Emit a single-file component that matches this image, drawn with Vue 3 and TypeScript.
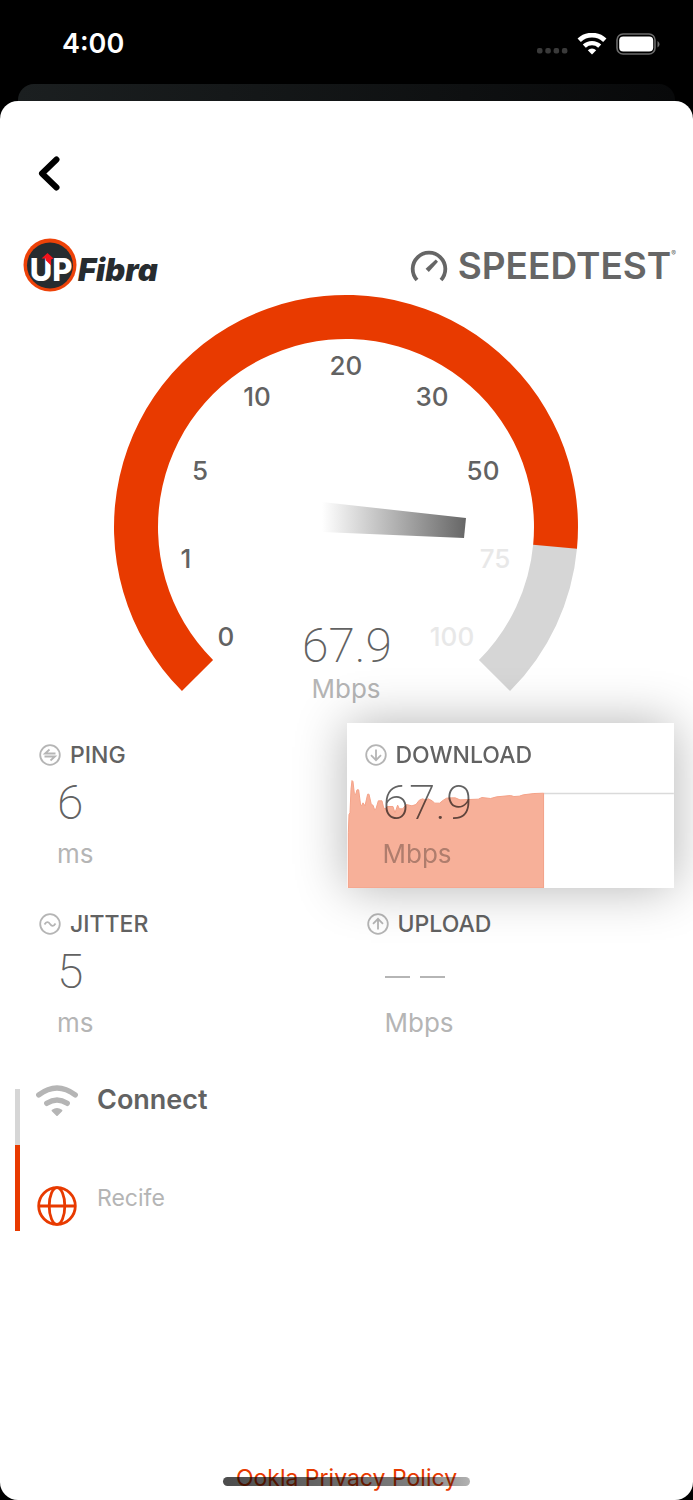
<script setup lang="ts">
import { computed } from 'vue'

interface Tick {
  label: string
  x: number
  y: number
  dim?: boolean
}

const OUTER = 232
const INNER = 188
const speed = 67.9
const needleAngle = 5.4

const ticks: Tick[] = [
  { label: '0', x: -120, y: 109 },
  { label: '1', x: -160, y: 31 },
  { label: '5', x: -146, y: -57 },
  { label: '10', x: -89, y: -131 },
  { label: '20', x: 0, y: -162 },
  { label: '30', x: 86, y: -131 },
  { label: '50', x: 137, y: -57 },
  { label: '75', x: 149, y: 31, dim: true },
  { label: '100', x: 106, y: 109, dim: true },
]

function band(from: number, to: number): string {
  const pt = (r: number, a: number) => {
    const rad = (a * Math.PI) / 180
    return `${(r * Math.cos(rad)).toFixed(2)} ${(r * Math.sin(rad)).toFixed(2)}`
  }
  const large = to - from > 180 ? 1 : 0
  return (
    `M${pt(OUTER, from)}A${OUTER} ${OUTER} 0 ${large} 1 ${pt(OUTER, to)}` +
    `L${pt(INNER, to)}A${INNER} ${INNER} 0 ${large} 0 ${pt(INNER, from)}Z`
  )
}

const track = band(needleAngle - 0.2, 45)
const progress = band(-225, needleAngle)

const samples: [number, number][] = [
  [4, 330], [6, 275], [9, 270], [12, 200], [15, 173], [18, 176], [22, 212], [26, 215],
  [30, 201], [35, 201], [41, 248], [44, 248], [48, 240], [54, 249], [62, 214], [66, 214],
  [73, 245], [78, 247], [83, 261], [87, 258], [94, 234], [105, 234], [110, 255], [115, 258],
  [121, 251], [138, 251], [144, 270], [152, 247], [157, 258], [167, 258], [178, 245],
  [195, 249], [207, 245], [217, 232], [227, 228], [237, 232], [244, 228], [256, 234],
  [263, 241], [278, 241], [289, 232], [299, 226], [313, 225], [325, 225], [339, 231],
  [394, 229], [405, 224], [431, 227], [449, 222], [491, 218], [501, 221], [517, 220],
  [529, 216], [561, 212], [590, 211],
]

const area = computed(() => `M4 496L${samples.map(([x, y]) => `${x} ${y}`).join('L')}V496Z`)
</script>

<template>
  <div class="phone">
    <header class="status">
      <time class="clock">4:00</time>
      <div class="status-icons">
        <svg class="dots" width="31" height="20" viewBox="0 0 31 20" aria-hidden="true">
          <rect v-for="n in 4" :key="n" :x="(n - 1) * 8.3" y="13" width="5.5" height="5.5" rx="2" fill="#3a3a3a" />
        </svg>
        <svg width="30" height="22" viewBox="0 0 30 22" fill="none" stroke="#fff" aria-hidden="true">
          <path d="M2.200 7.300a18.500 18.500 0 0 1 25.600 0" stroke-width="4.800" />
          <path d="M7.300 13.200a11.200 11.200 0 0 1 15.400 0" stroke-width="4.400" />
          <path d="M10.800 17.200a6 6 0 0 1 8.400 0L15 21.600Z" fill="#fff" stroke="none" />
        </svg>
        <svg width="44" height="22" viewBox="0 0 44 22" aria-hidden="true">
          <rect x="1" y="1" width="38" height="20" rx="6" fill="none" stroke="#6b6b6b" stroke-width="1.6" />
          <rect x="3.200" y="3.500" width="34" height="15" rx="4" fill="#fff" />
          <path d="M41.500 8v6.500c2.600-1.400 2.600-5 0-6.500Z" fill="#6b6b6b" />
        </svg>
      </div>
    </header>
    <div class="behind"></div>

    <main class="sheet">
      <button class="back" type="button" aria-label="Back">
        <svg width="22" height="36" viewBox="0 0 22 36" fill="none" stroke="#000" stroke-width="6" stroke-linecap="round" stroke-linejoin="round" aria-hidden="true">
          <path d="M18.500 3.500 4 17.500 18.500 31.500" />
        </svg>
      </button>

      <div class="brands">
        <svg class="up-logo" width="136" height="54" viewBox="0 0 136 54" role="img" aria-label="UP Fibra">
          <circle cx="27" cy="27" r="26.500" fill="#ee4208" />
          <circle cx="27" cy="27.500" r="23" fill="#272c2f" />
          <text class="up" x="28" y="43" text-anchor="middle">UP</text>
          <path d="M18.500 20.500 24.500 15l6 5.500-2.500 1v6l-5.500-5.500v-1.500Z" fill="#f5131c" />
          <text class="fibra" x="55" y="43">Fibra</text>
        </svg>
        <div class="speedtest">
          <svg width="38" height="34" viewBox="0 0 38 34" fill="none" stroke="#666" aria-hidden="true">
            <path d="M7 31A16.300 16.300 0 1 1 31 31" stroke-width="3.800" />
            <path d="M15.600 19.800 25.800 10.500l2.200 2.200-9.200 10.200Z" fill="#666" stroke="none" />
          </svg>
          <span class="wordmark">SPEEDTEST</span><sup class="reg">®</sup>
        </div>
      </div>

      <svg class="gauge" viewBox="-346 -235 693 412" role="img" aria-label="Download speed gauge">
        <defs>
          <linearGradient id="needle-fade" x1="0" x2="1">
            <stop offset="0" stop-color="#666" stop-opacity="0" />
            <stop offset="1" stop-color="#666" />
          </linearGradient>
        </defs>
        <path :d="track" fill="#d6d6d6" />
        <path :d="progress" fill="#e83a00" />
        <path d="M-24-25 120-9 118 11-24 5Z" fill="url(#needle-fade)" />
        <text v-for="t in ticks" :key="t.label" :x="t.x" :y="t.y" class="tick" :class="{ dim: t.dim }">{{ t.label }}</text>
        <text x="1" y="135" class="reading">{{ speed }}</text>
        <text x="0" y="171" class="reading-unit">Mbps</text>
      </svg>

      <section class="metrics">
        <article class="metric">
          <h2 class="label">
            <svg class="glyph" viewBox="0 0 22 22" aria-hidden="true">
              <circle cx="11" cy="11" r="9.800" />
              <path d="M16.500 9.500H6l4.500-4M5.500 12.500H16l-4.500 4" />
            </svg>
            PING
          </h2>
          <p class="value">6</p>
          <p class="unit">ms</p>
        </article>

        <article class="metric active">
          <h2 class="label">
            <svg class="glyph" viewBox="0 0 22 22" aria-hidden="true">
              <circle cx="11" cy="11" r="9.800" />
              <path d="M11 5.500v10.500M6 11.200l5 5 5-5" />
            </svg>
            DOWNLOAD
          </h2>
          <p class="value">{{ speed }}</p>
          <p class="unit">Mbps</p>
          <svg class="chart" viewBox="0 0 983 496" preserveAspectRatio="none" aria-hidden="true">
            <path d="M590 212H981" stroke="#dadada" stroke-width="5" />
            <path :d="area" fill="#f7b099" stroke="#f4a288" stroke-width="3" />
          </svg>
        </article>

        <article class="metric">
          <h2 class="label">
            <svg class="glyph" viewBox="0 0 22 22" aria-hidden="true">
              <circle cx="11" cy="11" r="9.800" />
              <path d="M5.500 11.500q2.750-4.500 5.500-.5t5.500-.5" />
            </svg>
            JITTER
          </h2>
          <p class="value">5</p>
          <p class="unit">ms</p>
        </article>

        <article class="metric">
          <h2 class="label">
            <svg class="glyph" viewBox="0 0 22 22" aria-hidden="true">
              <circle cx="11" cy="11" r="9.800" />
              <path d="M11 16.500V6M6 10.800l5-5 5 5" />
            </svg>
            UPLOAD
          </h2>
          <p class="value pending" aria-label="Pending"><i></i><i></i></p>
          <p class="unit">Mbps</p>
        </article>
      </section>

      <section class="network">
        <div class="row wifi-row">
          <svg class="net-icon" width="42" height="32" viewBox="0 0 42 32" fill="none" stroke="#b5b5b5" stroke-linecap="round" aria-hidden="true">
            <path d="M2.800 9.800Q21-4 39.200 9.800" stroke-width="5.400" />
            <path d="M10.800 18.300q10.200-6.500 20.400 0" stroke-width="5.400" />
            <path d="M16.500 25.500q4.500-3 9 0L21 30Z" fill="#b5b5b5" stroke-width="1.800" stroke-linejoin="round" />
          </svg>
          <span class="provider">Connect</span>
        </div>
        <div class="row server-row">
          <svg class="net-icon" width="42" height="40" viewBox="0 0 42 40" fill="none" stroke="#e83a00" stroke-width="2.800" aria-hidden="true">
            <circle cx="21" cy="20" r="18.300" />
            <ellipse cx="21" cy="20" rx="7.800" ry="18.300" />
            <path d="M2.500 20h37" />
          </svg>
          <span class="server">Recife</span>
        </div>
      </section>

      <footer class="footer">
        <a class="policy" href="#privacy">Ookla Privacy Policy</a>
        <span class="home-indicator"></span>
      </footer>
    </main>
  </div>
</template>

<style>
html,
body {
  margin: 0;
  background: #000;
}
</style>

<style scoped>
.phone {
  display: flex;
  flex-direction: column;
  min-height: 100vh;
  background: #000;
  color: #626262;
  font-family: Inter, "Open Sans", sans-serif;
}
.status {
  display: flex;
  align-items: center;
  justify-content: space-between;
  height: 84px;
  box-sizing: border-box;
  padding: 4px 33px 0 62px;
  color: #fff;
}
.clock {
  font-size: 27px;
  line-height: 32px;
  font-weight: 600;
}
.status-icons {
  display: flex;
  align-items: center;
  gap: 9px;
}
.dots {
  align-self: flex-end;
}
.behind {
  height: 17px;
  margin: 0 18px;
  border-radius: 16px 16px 0 0;
  background: linear-gradient(90deg, #1b1f20, #08090a);
}
.sheet {
  display: flex;
  flex: 1;
  flex-direction: column;
  background: #fff;
  border-radius: 18px;
}
.back {
  display: flex;
  align-self: flex-start;
  margin: 55px 0 0 38px;
  padding: 0;
  border: 0;
  background: none;
  cursor: pointer;
}
.brands {
  display: flex;
  align-items: center;
  justify-content: space-between;
  height: 54px;
  margin-top: 46px;
  padding: 0 17px 0 23px;
}
.up-logo {
  overflow: visible;
}
.up {
  fill: #fff;
  font-size: 31px;
  font-weight: 800;
}
.fibra {
  fill: #272c2f;
  font-size: 31px;
  font-weight: 900;
  font-style: italic;
}
.speedtest {
  display: flex;
  align-items: center;
  padding-top: 2px;
  color: #666;
}
.wordmark {
  margin-left: 10px;
  font-size: 37px;
  line-height: 40px;
  font-weight: 600;
}
.reg {
  align-self: flex-start;
  font-size: 7px;
  line-height: 16px;
}
.gauge {
  display: block;
  width: 100%;
}
.tick {
  fill: #626262;
  font-size: 26px;
  font-weight: 500;
  text-anchor: middle;
  dominant-baseline: central;
}
.tick.dim {
  fill: #e8e8e8;
}
.reading {
  fill: #626262;
  font-family: Roboto, Inter, sans-serif;
  font-size: 48px;
  font-weight: 200;
  text-anchor: middle;
}
.reading-unit {
  fill: #b5b5b5;
  font-size: 26px;
  text-anchor: middle;
}
.metrics {
  display: grid;
  grid-template-columns: 1fr 1fr;
  gap: 4px 0;
  padding: 19px 19px 0;
}
.metric {
  height: 165px;
  box-sizing: border-box;
  padding: 20px 20px 0;
}
.metric.active {
  position: relative;
  padding-left: 18px;
  background: #fff;
  box-shadow: 0 0 48px rgba(0, 0, 0, 0.3);
  isolation: isolate;
}
.label {
  display: flex;
  align-items: center;
  gap: 9px;
  margin: 0;
  font-size: 23px;
  line-height: 24px;
  font-weight: 500;
}
.glyph {
  width: 22px;
  height: 22px;
  fill: none;
  stroke: #b5b5b5;
  stroke-width: 1.800;
}
.value {
  height: 46px;
  margin: 13px 0 0 18px;
  font-family: Roboto, Inter, sans-serif;
  font-size: 48px;
  line-height: 46px;
  font-weight: 200;
}
.pending {
  display: flex;
  align-items: center;
  gap: 10px;
  box-sizing: border-box;
  padding-top: 10px;
}
.pending i {
  width: 25px;
  height: 2px;
  background: #b5b5b5;
}
.unit {
  margin: 14px 0 0 18px;
  color: #b5b5b5;
  font-size: 26px;
  line-height: 28px;
}
.chart {
  position: absolute;
  inset: 0;
  width: 100%;
  height: 100%;
  mix-blend-mode: multiply;
}
.network {
  margin: 32px 15px 0;
}
.row {
  display: flex;
  align-items: flex-start;
  gap: 19px;
  box-sizing: border-box;
  padding-left: 16px;
  border-left: 5px solid #d6d6d6;
}
.wifi-row {
  height: 56px;
}
.wifi-row .net-icon {
  margin-top: -4px;
}
.server-row {
  height: 86px;
  padding-top: 41px;
  border-color: #e83a00;
}
.provider {
  margin-top: -5px;
  font-size: 27px;
  line-height: 32px;
  font-weight: 600;
}
.server {
  color: #b5b5b5;
  font-size: 23px;
  line-height: 24px;
}
.footer {
  position: relative;
  display: flex;
  justify-content: center;
  margin-top: auto;
  padding-bottom: 8px;
}
.policy {
  color: #e83a00;
  font-size: 23px;
  line-height: 28px;
  text-decoration: none;
}
.home-indicator {
  position: absolute;
  bottom: 14px;
  width: 247px;
  height: 9px;
  border-radius: 5px;
  background: linear-gradient(90deg, rgba(0, 0, 0, 0.7), rgba(0, 0, 0, 0.5) 80%, rgba(0, 0, 0, 0.3));
}
</style>
